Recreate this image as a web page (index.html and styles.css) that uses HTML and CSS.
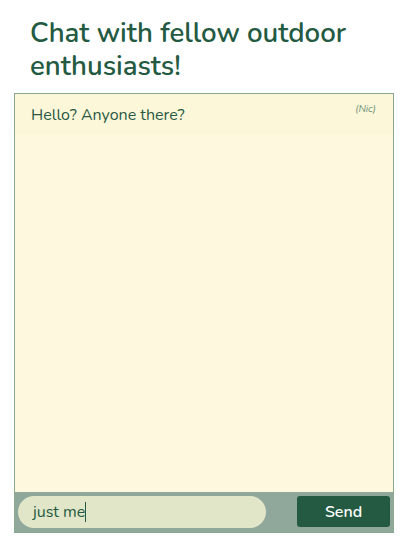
FILE: index.html
```html
<!DOCTYPE html>
<html lang="en">
<head>
<meta charset="utf-8">
<title>Chat</title>
<link rel="stylesheet" href="styles.css">
</head>
<body>
<main class="page">
  <h1 class="title">Chat with fellow outdoor enthusiasts!</h1>
  <section class="chat">
    <div class="messages">
      <div class="message">
        <span class="message-text">Hello? Anyone there?</span>
        <span class="message-author">(Nic)</span>
      </div>
    </div>
    <form class="composer">
      <div class="composer-input"><span class="typed">just me</span><span class="caret"></span></div>
      <button type="button" class="send">Send</button>
    </form>
  </section>
</main>
</body>
</html>
```
FILE: styles.css
```css
* { box-sizing: border-box; }
html, body { margin: 0; padding: 0; background: #ffffff; }
body {
  font-family: "Nunito", Lato, "Open Sans", sans-serif;
  color: #235a41;
}
.page {
  padding: 0 23px 0 14px;
}
.title {
  margin: 0;
  padding: 17px 16px 10px;
  font-size: 27.6px;
  line-height: 33px;
  font-weight: 600;
  color: #235a41;
}
.chat {
  border: 1px solid #8aa890;
  display: flex;
  flex-direction: column;
  height: 440px;
  background: #fef8df;
}
.messages {
  flex: 1;
}
.message {
  display: flex;
  justify-content: space-between;
  align-items: flex-start;
  padding: 9px 17px 8px 16px;
  height: 41px;
  background: #fcf7d8;
}
.message-text {
  font-size: 16px;
  line-height: 24px;
  color: #2a5a45;
}
.message-author {
  font-size: 10px;
  font-style: italic;
  color: #6b8f7b;
  line-height: 12px;
  padding-top: 0;
}
.composer {
  margin: 0;
  display: flex;
  justify-content: space-between;
  align-items: flex-start;
  background: #90a89b;
  padding: 4px 3px 3px;
  height: 40px;
}
.composer-input {
  width: 248px;
  height: 32px;
  border-radius: 16px;
  background: #e1e6c8;
  padding: 0 15px;
  display: flex;
  align-items: center;
  font-size: 16px;
  color: #235a41;
}
.caret {
  display: inline-block;
  width: 1px;
  height: 20px;
  background: #235a41;
}
.send {
  width: 93px;
  height: 31px;
  border: none;
  border-radius: 3px;
  background: #235a41;
  color: #ffffff;
  font-family: inherit;
  font-size: 16px;
  font-weight: 600;
  padding: 0;
}
```
